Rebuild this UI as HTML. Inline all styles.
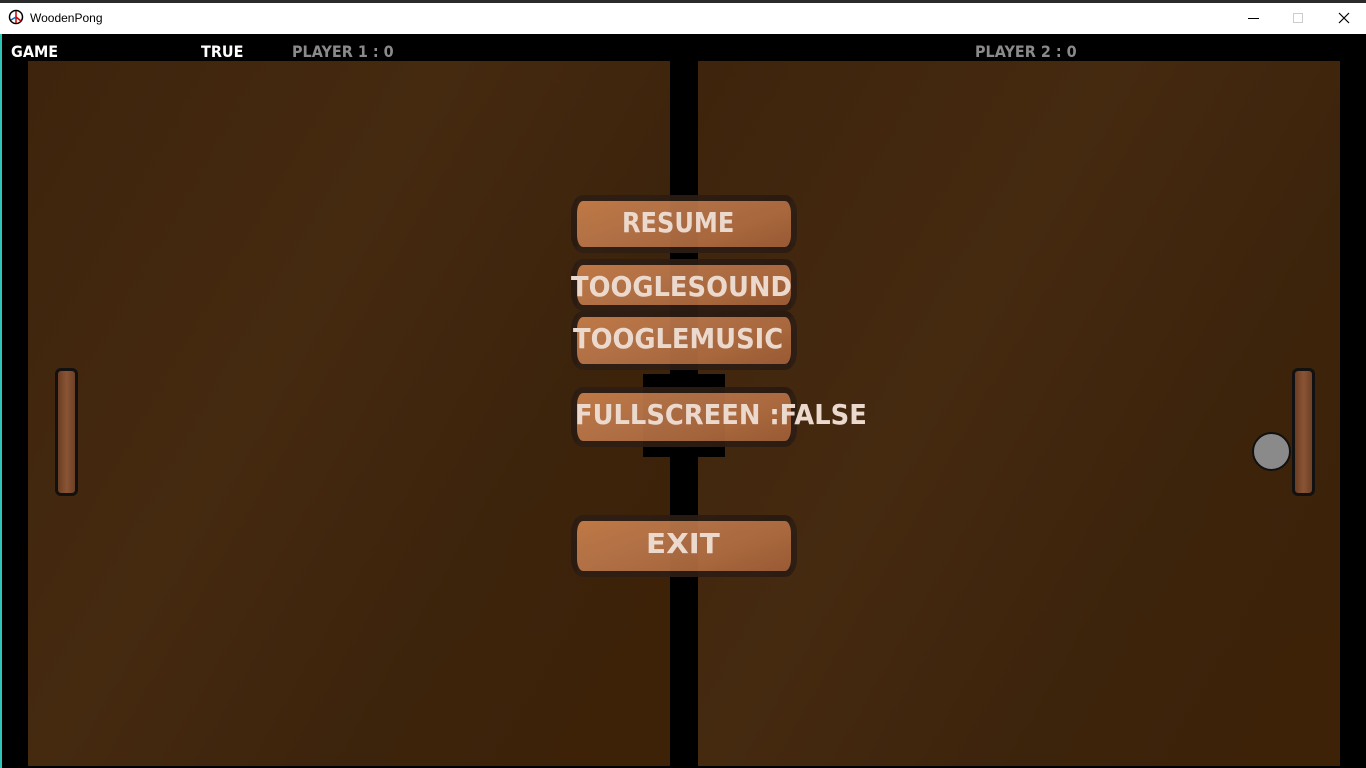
<!DOCTYPE html>
<html><head><meta charset="utf-8"><style>
*{margin:0;padding:0;box-sizing:border-box}
body{width:1366px;height:768px;overflow:hidden;background:#000;position:relative;font-family:"Liberation Sans",sans-serif}
.tb{position:absolute;left:0;top:0;width:1366px;height:34px;background:#fff;border-top:3px solid #2b2b2b}
.tb .t{position:absolute;left:30px;top:8px;font-size:12px;color:#000}
.ab{position:absolute}
.hud{position:absolute;top:42px;font-weight:bold;font-size:16px;font-family:"DejaVu Sans","Liberation Sans",sans-serif;transform-origin:0 0;transform:scaleX(0.9);white-space:nowrap}
.board{position:absolute;top:61px;height:705px;background:linear-gradient(120deg,#3e240c,#452a10 40%,#3c230b 70%,#3d2207)}
.pad{position:absolute;width:23px;height:128px;border:3px solid #111;border-radius:6px;background:linear-gradient(90deg,#6a3d22,#8a5435 50%,#6d4025)}
.btn{position:absolute;left:571px;width:226px;border:6px solid rgba(20,14,10,.85);border-radius:12px/18px;background:linear-gradient(160deg,#c9804a,#b9754a 40%,#b06c40 70%,#9f5e38);opacity:.93}
.lbl{position:absolute;font-family:"DejaVu Sans","Liberation Sans",sans-serif;font-weight:bold;color:#ecd9cd;font-size:28px;white-space:nowrap;transform-origin:0 0;transform:scaleX(0.92)}
</style></head><body>
<div class="tb">
<svg class="ab" style="left:8px;top:6px" width="16" height="16" viewBox="0 0 16 16"><circle cx="8" cy="8" r="6.5" fill="#fff" stroke="#000" stroke-width="1.5"/><path d="M8 2v12M8 8l5 4" stroke="#c00" stroke-width="1.5"/><path d="M8 8l-5 3" stroke="#06c" stroke-width="1.5"/></svg>
<div class="t">WoodenPong</div>
<div class="ab" style="left:1248px;top:15px;width:11px;height:1px;background:#000"></div>
<div class="ab" style="left:1293px;top:10px;width:10px;height:10px;border:1px solid #ccc"></div>
<svg class="ab" style="left:1338px;top:9px" width="12" height="12"><path d="M1 1L11 11M11 1L1 11" stroke="#000" stroke-width="1.2"/></svg>
</div>
<div class="ab" style="left:0;top:34px;width:2px;height:734px;background:#2ec4b6"></div>
<div class="hud" style="left:11px;color:#fff">GAME</div>
<div class="hud" style="left:201px;color:#fff">TRUE</div>
<div class="hud" style="left:292px;color:#8a8a8a">PLAYER 1 : 0</div>
<div class="hud" style="left:975px;color:#8a8a8a">PLAYER 2 : 0</div>
<div class="board" style="left:28px;width:642px"></div>
<div class="board" style="left:698px;width:642px"></div>
<div class="pad" style="left:55px;top:368px"></div>
<div class="pad" style="left:1292px;top:368px"></div>
<div class="ab" style="left:1252px;top:432px;width:39px;height:39px;border-radius:50%;background:#8a8a8a;border:2px solid #111"></div>
<div class="ab" style="left:670px;top:195px;width:28px;height:382px;background:#000"></div>
<div class="btn" style="top:195px;height:58px"></div>
<div class="btn" style="top:259px;height:52px"></div>
<div class="btn" style="top:311px;height:59px"></div>
<div class="ab" style="left:643px;top:374px;width:82px;height:83px;background:#000"></div>
<div class="btn" style="top:387px;height:60px"></div>
<div class="btn" style="top:515px;height:62px"></div>
<div class="lbl" style="left:622px;top:206px;transform:scaleX(0.86)">RESUME</div>
<div class="lbl" style="left:571px;top:270px">TOOGLESOUND</div>
<div class="lbl" style="left:573px;top:322px">TOOGLEMUSIC</div>
<div class="lbl" style="left:575px;top:398px">FULLSCREEN :FALSE</div>
<div class="lbl" style="left:646px;top:527px;transform:scaleX(1.05)">EXIT</div>
</body></html>
